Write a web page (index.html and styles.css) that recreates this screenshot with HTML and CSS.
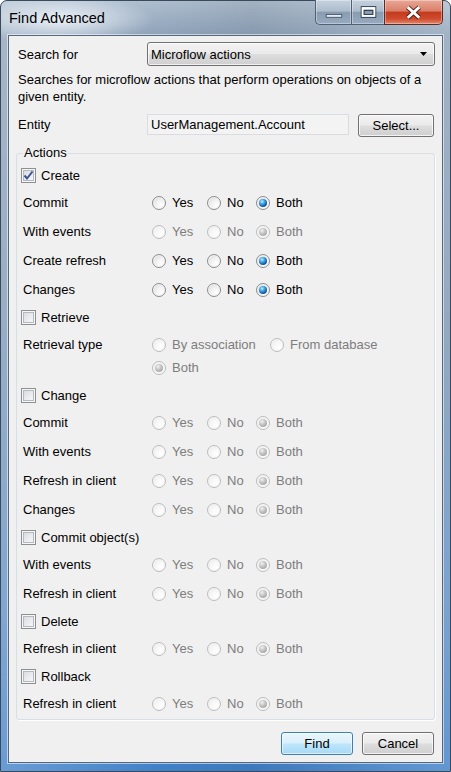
FILE: index.html
```html
<!DOCTYPE html>
<html>
<head>
<meta charset="utf-8">
<title>Find Advanced</title>
<link rel="stylesheet" href="styles.css">
</head>
<body>
<div class="window">
  <div class="titlebar">
    <span class="title">Find Advanced</span>
    <div class="caption">
      <div class="cbtn min"><svg width="36" height="24" viewBox="0 0 36 24"><rect x="10.5" y="14.5" width="16" height="3" fill="#e6ecf2" stroke="#4a5b6f"/></svg></div>
      <div class="cbtn max"><svg width="33" height="24" viewBox="0 0 33 24"><rect x="9.5" y="6.5" width="15" height="11" fill="none" stroke="#2b3a4c"/><rect x="11" y="8" width="12" height="8" fill="none" stroke="#fff" stroke-width="2"/><rect x="12.5" y="10.5" width="9" height="4" fill="#8c9eb2" stroke="#2b3a4c"/></svg></div>
      <div class="cbtn close"><svg width="59" height="24" viewBox="0 0 59 24"><path d="M23.5 7 L35.5 18 M35.5 7 L23.5 18" stroke="#4b1e15" stroke-width="5"/><path d="M23.5 7 L35.5 18 M35.5 7 L23.5 18" stroke="#fff" stroke-width="3"/></svg></div>
    </div>
  </div>
  <div class="client">
    <div class="row-search">
      <span class="lbl">Search for</span>
      <div class="combo"><span>Microflow actions</span><svg width="8" height="5" viewBox="0 0 8 5"><path d="M0 0 H7 L3.5 4 Z" fill="#000"/></svg></div>
    </div>
    <p class="desc">Searches for microflow actions that perform operations on objects of a<br>given entity.</p>
    <div class="row-entity">
      <span class="lbl">Entity</span>
      <div class="textbox">UserManagement.Account</div>
      <button class="btn select">Select...</button>
    </div>

    <fieldset class="group">
      <legend>Actions</legend>

      <div class="cb-row"><span class="checkbox"><svg width="13" height="13" viewBox="0 0 13 13"><path d="M2.5 6.5 L5 9.5 L10.5 2.5" fill="none" stroke="#3a5497" stroke-width="2"/></svg></span><span>Create</span></div>
      <div class="opt-row"><span class="lbl">Commit</span><div class="opts">
        <span class="opt w-yes"><span class="radio"></span>Yes</span><span class="opt w-no"><span class="radio"></span>No</span><span class="opt"><span class="radio on"></span>Both</span></div></div>
      <div class="opt-row"><span class="lbl">With events</span><div class="opts dis">
        <span class="opt w-yes"><span class="radio"></span>Yes</span><span class="opt w-no"><span class="radio"></span>No</span><span class="opt"><span class="radio on"></span>Both</span></div></div>
      <div class="opt-row"><span class="lbl">Create refresh</span><div class="opts">
        <span class="opt w-yes"><span class="radio"></span>Yes</span><span class="opt w-no"><span class="radio"></span>No</span><span class="opt"><span class="radio on"></span>Both</span></div></div>
      <div class="opt-row"><span class="lbl">Changes</span><div class="opts">
        <span class="opt w-yes"><span class="radio"></span>Yes</span><span class="opt w-no"><span class="radio"></span>No</span><span class="opt"><span class="radio on"></span>Both</span></div></div>

      <div class="cb-row"><span class="checkbox"></span><span>Retrieve</span></div>
      <div class="ret-row"><span class="lbl">Retrieval type</span><div class="opts wrap dis">
        <span class="opt w-assoc"><span class="radio"></span>By association</span><span class="opt"><span class="radio"></span>From database</span><span class="opt full"><span class="radio on"></span>Both</span></div></div>

      <div class="cb-row"><span class="checkbox"></span><span>Change</span></div>
      <div class="opt-row"><span class="lbl">Commit</span><div class="opts dis">
        <span class="opt w-yes"><span class="radio"></span>Yes</span><span class="opt w-no"><span class="radio"></span>No</span><span class="opt"><span class="radio on"></span>Both</span></div></div>
      <div class="opt-row"><span class="lbl">With events</span><div class="opts dis">
        <span class="opt w-yes"><span class="radio"></span>Yes</span><span class="opt w-no"><span class="radio"></span>No</span><span class="opt"><span class="radio on"></span>Both</span></div></div>
      <div class="opt-row"><span class="lbl">Refresh in client</span><div class="opts dis">
        <span class="opt w-yes"><span class="radio"></span>Yes</span><span class="opt w-no"><span class="radio"></span>No</span><span class="opt"><span class="radio on"></span>Both</span></div></div>
      <div class="opt-row"><span class="lbl">Changes</span><div class="opts dis">
        <span class="opt w-yes"><span class="radio"></span>Yes</span><span class="opt w-no"><span class="radio"></span>No</span><span class="opt"><span class="radio on"></span>Both</span></div></div>

      <div class="cb-row"><span class="checkbox"></span><span>Commit object(s)</span></div>
      <div class="opt-row"><span class="lbl">With events</span><div class="opts dis">
        <span class="opt w-yes"><span class="radio"></span>Yes</span><span class="opt w-no"><span class="radio"></span>No</span><span class="opt"><span class="radio on"></span>Both</span></div></div>
      <div class="opt-row"><span class="lbl">Refresh in client</span><div class="opts dis">
        <span class="opt w-yes"><span class="radio"></span>Yes</span><span class="opt w-no"><span class="radio"></span>No</span><span class="opt"><span class="radio on"></span>Both</span></div></div>

      <div class="cb-row"><span class="checkbox"></span><span>Delete</span></div>
      <div class="opt-row"><span class="lbl">Refresh in client</span><div class="opts dis">
        <span class="opt w-yes"><span class="radio"></span>Yes</span><span class="opt w-no"><span class="radio"></span>No</span><span class="opt"><span class="radio on"></span>Both</span></div></div>

      <div class="cb-row"><span class="checkbox"></span><span>Rollback</span></div>
      <div class="opt-row"><span class="lbl">Refresh in client</span><div class="opts dis">
        <span class="opt w-yes"><span class="radio"></span>Yes</span><span class="opt w-no"><span class="radio"></span>No</span><span class="opt"><span class="radio on"></span>Both</span></div></div>
    </fieldset>

    <div class="footer">
      <button class="btn default">Find</button>
      <button class="btn">Cancel</button>
    </div>
  </div>
</div>
</body>
</html>
```

FILE: styles.css
```css
* { box-sizing: border-box; }
html, body { margin: 0; padding: 0; }
body {
  width: 451px;
  height: 772px;
  overflow: hidden;
  background: #ffffff;
  font-family: "Liberation Sans", Arial, sans-serif;
  font-size: 13px;
  color: #000;
}

.window {
  width: 451px;
  height: 772px;
  display: flex;
  flex-direction: column;
  padding: 0 7px 8px 7px;
  border: 1px solid #3a4a5d;
  border-radius: 7px 7px 0 0;
  background:
    radial-gradient(ellipse 95px 24px at 58px 18px, rgba(238,244,250,0.95), rgba(238,244,250,0)),
    linear-gradient(to right, rgba(255,255,255,0.22) 0, rgba(255,255,255,0) 160px, rgba(0,0,0,0.06) 250px, rgba(255,255,255,0.18) 451px),
    linear-gradient(to bottom, #adbdce 0, #8ea2b9 34px, #7f97b3 300px, #608fc3 600px, #3f80c8 772px);
}

.titlebar {
  height: 34px;
  display: flex;
  align-items: flex-start;
  padding-left: 1px;
}
.title {
  margin-top: 9px;
  font-size: 14.5px;
  line-height: 17px;
  color: #000;
}
.caption {
  margin-left: auto;
  margin-top: -1px;
  display: flex;
  height: 25px;
}
.cbtn {
  height: 25px;
  border: 1px solid #4f6176;
  border-top: none;
  display: flex;
  align-items: center;
  justify-content: center;
  box-shadow: inset 0 0 0 1px rgba(255,255,255,0.35);
}
.cbtn svg { display: block; }
.cbtn.min {
  width: 36px;
  border-radius: 0 0 0 5px;
  border-right: none;
  background: linear-gradient(to bottom, #c6d2de 0%, #adbccc 46%, #8a9cb1 52%, #97aac0 100%);
}
.cbtn.max {
  width: 33px;
  border-right: none;
  background: linear-gradient(to bottom, #c6d2de 0%, #adbccc 46%, #8a9cb1 52%, #97aac0 100%);
}
.cbtn.close {
  width: 59px;
  border-color: #5c2b21;
  border-radius: 0 0 5px 0;
  background: linear-gradient(to bottom, #e9a897 0%, #d9806a 45%, #c43c20 52%, #cf4a2c 78%, #e2876b 100%);
}

.client {
  flex: 1;
  display: flex;
  flex-direction: column;
  background: #f0f0f0;
  border: 1px solid #56687d;
  box-shadow: 0 0 0 1px rgba(255,255,255,0.55);
}

.row-search {
  display: flex;
  align-items: center;
  height: 24px;
  margin: 6px 7px 0 9px;
}
.lbl {
  width: 129px;
  flex: none;
  white-space: nowrap;
}
.combo {
  flex: 1;
  height: 24px;
  display: flex;
  align-items: center;
  justify-content: space-between;
  padding: 0 6px 0 3px;
  border: 1px solid #707070;
  border-radius: 3px;
  background: linear-gradient(to bottom, #f2f2f2 0%, #ebebeb 48%, #dddddd 52%, #cfcfcf 100%);
  box-shadow: inset 0 0 0 1px rgba(255,255,255,0.7);
}
.combo svg { display: block; }

.desc {
  margin: 5px 7px 0 9px;
  line-height: 17px;
}

.row-entity {
  display: flex;
  align-items: flex-start;
  margin: 9px 8px 0 9px;
  height: 23px;
}
.row-entity .lbl { line-height: 21px; }
.textbox {
  width: 202px;
  height: 21px;
  line-height: 19px;
  padding-left: 3px;
  border: 1px solid #d9dce0;
  background: #f3f3f3;
}

.btn {
  font-family: inherit;
  font-size: 13px;
  color: #000;
  height: 23px;
  width: 72px;
  padding: 0;
  border: 1px solid #707070;
  border-radius: 3px;
  background: linear-gradient(to bottom, #f2f2f2 0%, #ebebeb 48%, #dddddd 52%, #cfcfcf 100%);
  box-shadow: inset 0 0 0 1px rgba(255,255,255,0.75);
}
.btn.select { width: 76px; margin-left: 9px; }
.btn.default {
  border-color: #3c7fb1;
  background: linear-gradient(to bottom, #eaf6fd 0%, #d9f0fc 48%, #bee6fd 52%, #a7d9f5 100%);
  box-shadow: inset 0 0 0 1px rgba(255,255,255,0.6);
}

.group {
  margin: 8px 7px 0 7px;
  padding: 1px 6px 1px 6px;
  min-width: 0;
  border: 1px solid #d5dfe5;
  border-radius: 3px;
  box-shadow: 1px 1px 0 #ffffff;
}
.group legend {
  padding: 0 1px;
  line-height: 16px;
  font-size: 13px;
}

.cb-row {
  height: 26px;
  display: flex;
  align-items: center;
}
.checkbox {
  width: 15px;
  height: 15px;
  margin-left: -2px;
  margin-right: 5px;
  flex: none;
  display: flex;
  align-items: center;
  justify-content: center;
  border: 1px solid #8e8f8f;
  background: linear-gradient(135deg, #d3d6da 0%, #eceef0 60%, #fbfbfb 100%);
  box-shadow: inset 0 0 0 1px #f7f7f7, inset 0 0 0 2px #b4b9bf;
}
.checkbox svg { display: block; }

.opt-row {
  height: 29px;
  display: flex;
  align-items: center;
}
.opts {
  display: flex;
  align-items: center;
}
.opt {
  display: flex;
  align-items: center;
  gap: 6px;
  white-space: nowrap;
}
.w-yes { width: 55px; }
.w-no { width: 49px; }
.w-assoc { width: 118px; }

.ret-row {
  display: flex;
  align-items: flex-start;
  padding: 3px 0;
}
.ret-row .lbl { line-height: 23px; }
.opts.wrap {
  flex-wrap: wrap;
  width: 260px;
}
.opts.wrap .opt { height: 23px; }
.opt.full { flex-basis: 100%; }

.radio {
  position: relative;
  flex: none;
  width: 14px;
  height: 14px;
  border-radius: 50%;
  border: 1px solid #8b8c8d;
  background: radial-gradient(circle at 70% 72%, #ffffff 0%, #f1f1f1 45%, #cfd0d2 100%);
  box-shadow: inset 0 0 0 1px #f6f6f6;
}
.radio.on::after {
  content: "";
  position: absolute;
  left: 2px;
  top: 2px;
  width: 8px;
  height: 8px;
  border-radius: 50%;
  background: radial-gradient(circle at 38% 32%, #c6f3ff 0%, #4eb0ea 28%, #1463b0 62%, #0b2e5e 100%);
}

.opts.dis { color: #7d7d7d; }
.opts.dis .radio {
  border-color: #bdbdbd;
  background: radial-gradient(circle at 70% 72%, #ffffff 0%, #f6f6f6 50%, #e2e2e2 100%);
}
.opts.dis .radio.on::after {
  background: radial-gradient(circle at 38% 32%, #f2f2f2 0%, #c6c6c6 40%, #a4a4a4 80%, #8f8f8f 100%);
}

.footer {
  display: flex;
  justify-content: flex-end;
  gap: 9px;
  margin: 12px 8px 0 0;
}
```
